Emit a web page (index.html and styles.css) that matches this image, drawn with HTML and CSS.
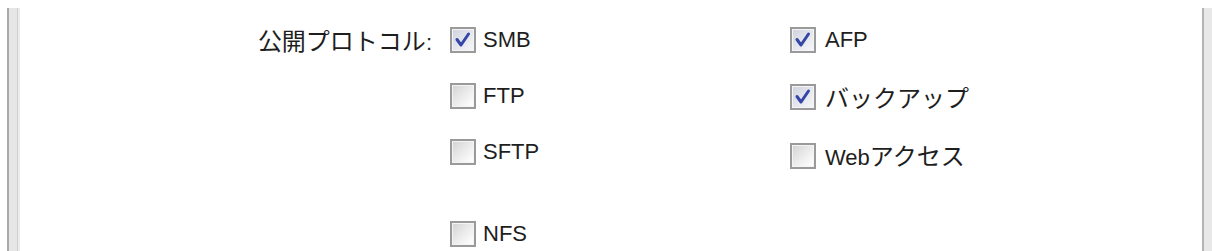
FILE: index.html
```html
<!DOCTYPE html>
<html lang="ja">
<head>
<meta charset="utf-8">
<link rel="stylesheet" href="styles.css">
</head>
<body>
<div class="page">
  <div class="bar bar-left"></div>
  <div class="content">
    <div class="form-row">
      <div class="label"><span class="jp">公開プロトコル</span>:</div>
      <div class="options">
        <div class="opt-row">
          <label class="opt col-a"><span class="cb checked"><svg viewBox="0 0 22 22" width="22" height="22"><path d="M5 10.5 L9 16 L16.5 5" /></svg></span><span class="txt">SMB</span></label>
          <label class="opt col-b"><span class="cb checked"><svg viewBox="0 0 22 22" width="22" height="22"><path d="M5 10.5 L9 16 L16.5 5" /></svg></span><span class="txt">AFP</span></label>
        </div>
        <div class="opt-row">
          <label class="opt col-a"><span class="cb"></span><span class="txt">FTP</span></label>
          <label class="opt col-b nudge-1"><span class="cb checked"><svg viewBox="0 0 22 22" width="22" height="22"><path d="M5 10.5 L9 16 L16.5 5" /></svg></span><span class="txt jp">バックアップ</span></label>
        </div>
        <div class="opt-row">
          <label class="opt col-a"><span class="cb"></span><span class="txt">SFTP</span></label>
          <label class="opt col-b nudge-4"><span class="cb"></span><span class="txt">Web<span class="jp">アクセス</span></span></label>
        </div>
        <div class="opt-row last">
          <label class="opt col-a"><span class="cb"></span><span class="txt">NFS</span></label>
        </div>
      </div>
    </div>
  </div>
  <div class="bar bar-right"></div>
</div>
</body>
</html>
```

FILE: styles.css
```css
html, body {
  margin: 0;
  padding: 0;
  background: #ffffff;
}
body {
  width: 1212px;
  height: 251px;
  overflow: hidden;
  font-family: "Liberation Sans", "Noto Sans CJK JP", sans-serif;
  font-size: 22px;
  color: #1e1e1e;
}
.page {
  display: flex;
  height: 251px;
  padding-top: 8px;
  box-sizing: border-box;
  overflow: hidden;
}
.bar {
  flex: none;
  align-self: stretch;
}
.bar-left {
  margin-left: 7px;
  width: 13px;
  background: linear-gradient(to right, #a9a9a9 0, #a9a9a9 2px, #e6e6e6 2px, #e6e6e6 10px, #cfcfcf 10px, #cfcfcf 11px, #ececec 11px);
}
.bar-right {
  width: 10px;
  background: linear-gradient(to right, #b4b4b4 0, #b4b4b4 2px, #e8e8e8 2px);
}
.content {
  flex: 1;
  padding-top: 19px;
}
.form-row {
  display: flex;
  align-items: flex-start;
}
.label {
  width: 412px;
  text-align: right;
  height: 26px;
  line-height: 26px;
  margin-right: 18px;
  white-space: nowrap;
}
.jp {
  font-family: "Noto Sans CJK JP", sans-serif;
  font-size: 24px;
}
.options {
  display: flex;
  flex-direction: column;
  gap: 30px;
}
.opt-row {
  display: flex;
  height: 26px;
}
.opt-row.last {
  margin-top: 26px;
}
.opt {
  display: flex;
  align-items: center;
  gap: 7px;
  height: 26px;
}
.col-a {
  width: 340px;
}
.col-b {
  gap: 9px;
}
.nudge-1 {
  margin-top: 1px;
}
.nudge-4 {
  margin-top: 4px;
}
.txt {
  line-height: 26px;
  white-space: nowrap;
}
.cb {
  box-sizing: border-box;
  width: 26px;
  height: 26px;
  border: 2px solid #9a9a9a;
  background: linear-gradient(135deg, #d2d2d2 0%, #e9e9e9 45%, #fbfbfb 85%, #ffffff 100%);
  box-shadow: inset 0 0 0 1px #f4f4f4;
  display: flex;
}
.cb.checked {
  background: linear-gradient(135deg, #cfd2dc 0%, #e4e6ee 50%, #f7f8fb 100%);
}
.cb svg path {
  fill: none;
  stroke: #3646a6;
  stroke-width: 3;
  stroke-linecap: round;
  stroke-linejoin: round;
}
```
